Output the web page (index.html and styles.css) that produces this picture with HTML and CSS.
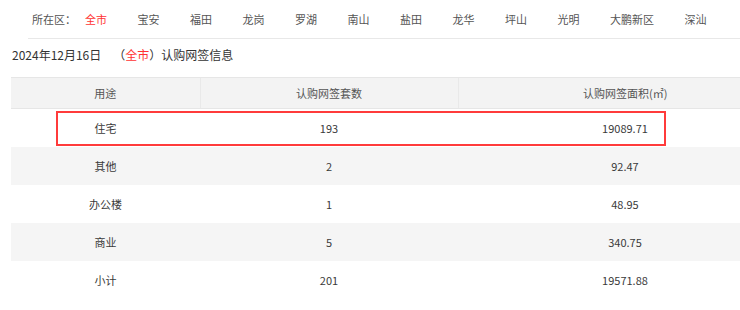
FILE: index.html
```html
<!DOCTYPE html>
<html lang="zh-CN">
<head>
<meta charset="utf-8">
<title>认购网签信息</title>
<link rel="stylesheet" href="styles.css">
</head>
<body>
<div class="nav">
  <span class="nav-label">所在区：</span>
  <a class="nav-item active">全市</a>
  <a class="nav-item">宝安</a>
  <a class="nav-item">福田</a>
  <a class="nav-item">龙岗</a>
  <a class="nav-item">罗湖</a>
  <a class="nav-item">南山</a>
  <a class="nav-item">盐田</a>
  <a class="nav-item">龙华</a>
  <a class="nav-item">坪山</a>
  <a class="nav-item">光明</a>
  <a class="nav-item">大鹏新区</a>
  <a class="nav-item">深汕</a>
</div>
<div class="title">2024年12月16日<span class="gap"></span>（<span class="red">全市</span>）认购网签信息</div>
<div class="table-wrap">
  <table class="data">
    <colgroup>
      <col class="c1"><col class="c2"><col class="c3">
    </colgroup>
    <thead>
      <tr><th>用途</th><th>认购网签套数</th><th class="area">认购网签面积(㎡)</th></tr>
    </thead>
    <tbody>
      <tr><td>住宅</td><td>193</td><td class="area">19089.71</td></tr>
      <tr><td>其他</td><td>2</td><td class="area">92.47</td></tr>
      <tr><td>办公楼</td><td>1</td><td class="area">48.95</td></tr>
      <tr><td>商业</td><td>5</td><td class="area">340.75</td></tr>
      <tr><td>小计</td><td>201</td><td class="area">19571.88</td></tr>
    </tbody>
  </table>
  <div class="highlight"></div>
</div>
</body>
</html>
```

FILE: styles.css
```css
html, body {
  margin: 0;
  padding: 0;
  overflow: hidden;
  background: #fff;
}
body {
  font-family: "Noto Sans CJK SC", "Noto Sans", sans-serif;
  color: #333;
}
.nav {
  margin-left: 28px;
  padding-left: 4px;
  height: 38px;
  border-bottom: 1px solid #e8e8e8;
  display: flex;
  align-items: center;
  font-size: 11px;
  color: #555;
  white-space: nowrap;
  overflow: hidden;
}
.nav-label {
  margin-right: 9px;
}
.nav-item {
  margin-right: 30.5px;
  color: #555;
  text-decoration: none;
}
.nav-item.active {
  color: #ff3333;
}
.title {
  padding-left: 12px;
  padding-top: 6px;
  line-height: 20px;
  height: 20px;
  margin-bottom: 12px;
  font-size: 12px;
  color: #333;
  white-space: nowrap;
}
.gap {
  display: inline-block;
  width: 12px;
}
.red {
  color: #ff3333;
}
.table-wrap {
  position: relative;
  margin-left: 11px;
  width: 729px;
}
.data {
  width: 729px;
  border-collapse: collapse;
  table-layout: fixed;
  font-size: 11px;
}
.c1 { width: 189px; }
.c2 { width: 258px; }
.c3 { width: 282px; }
.data th {
  height: 30px;
  padding: 0;
  background: #f3f3f3;
  border-top: 1px solid #e6e6e6;
  border-bottom: 1px solid #e6e6e6;
  border-left: 1px solid #e9e9e9;
  font-weight: normal;
  color: #555;
  text-align: center;
}
.data th:first-child {
  border-left: none;
}
.data td {
  height: 38px;
  padding: 0;
  text-align: center;
  color: #3a3a3a;
}
.data .area {
  padding-left: 52px;
}
.data tbody tr:nth-child(even) td {
  background: #f5f5f5;
}
.highlight {
  position: absolute;
  left: 45px;
  top: 34px;
  width: 610px;
  height: 35px;
  box-sizing: border-box;
  border: 2px solid #ff3b3b;
}
```
